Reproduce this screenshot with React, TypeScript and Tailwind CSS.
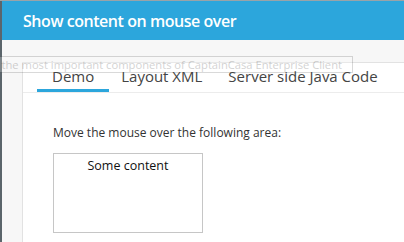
import React from "react";

export default function App() {
  const font = { fontFamily: '"Open Sans", "Noto Sans", sans-serif' };
  return (
    <div className="relative w-[404px] h-[242px] overflow-hidden flex flex-col bg-[#f7f7f7]" style={font}>
      <div className="h-[1px] bg-[#9aa3a8] shrink-0" />
      <div className="flex flex-1 min-h-0">
        <div className="w-[2px] bg-[#5b656b] shrink-0" />
        <div className="flex-1 flex flex-col min-w-0">
          <div className="h-[39px] bg-[#2ca6dc] flex items-center pl-[21px] shrink-0">
            <span className="text-white text-[16px] font-semibold leading-none tracking-[-0.45px]">Show content on mouse over</span>
          </div>
          <div className="flex-1 flex flex-col pt-[22px] pl-[20px] min-h-0">
            <div className="flex-1 bg-white border-l border-t border-[#e2e2e2] flex flex-col">
              <div className="flex border-b border-[#ececec] pl-[14px]">
                <div className="px-[15px] pt-[3px] pb-[3px] border-b-[3px] border-[#2ca6dc] text-[15px] leading-[20px] text-[#444]">Demo</div>
                <div className="pl-[12px] pr-[13px] pt-[3px] pb-[3px] border-b-[3px] border-transparent text-[15px] leading-[20px] text-[#444]">Layout XML</div>
                <div className="px-[13px] pt-[3px] pb-[3px] border-b-[3px] border-transparent text-[15px] leading-[20px] text-[#444] whitespace-nowrap">Server side Java Code</div>
              </div>
              <div className="pl-[30px] pt-[32px] flex flex-col">
                <div className="text-[12px] leading-[16px] text-[#333]">Move the mouse over the following area:</div>
                <div className="mt-[12px] w-[150px] h-[80px] border border-[#c6c6c6] flex justify-center pt-[4px]">
                  <span className="text-[12.5px] leading-[16px] text-[#111]">Some content</span>
                </div>
              </div>
            </div>
          </div>
        </div>
      </div>
      <div className="absolute left-0 top-[56px] w-[353px] h-[17px] border-t border-r border-b border-[#555] bg-white opacity-[0.22] flex items-center justify-end pr-[10px] whitespace-nowrap overflow-hidden">
        <span className="text-[11.2px] leading-[16px] text-[#333]">the most important components of CaptainCasa Enterprise Client</span>
      </div>
    </div>
  );
}
